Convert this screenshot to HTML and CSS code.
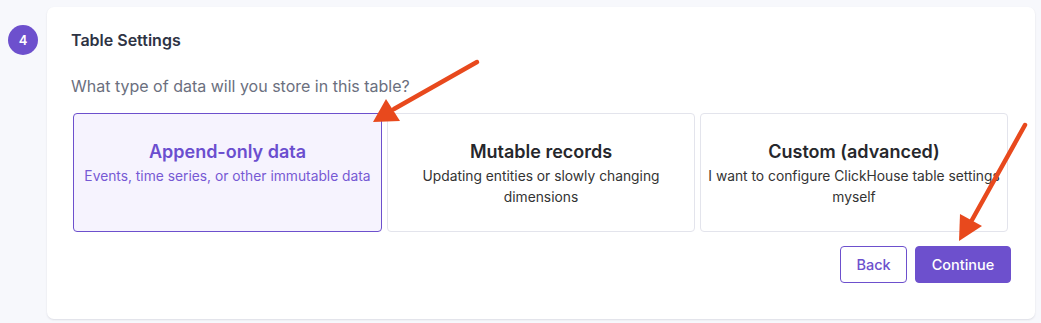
FILE: index.html
```html
<!doctype html>
<html>

<head>
    <meta charset="UTF-8">
    <meta name="viewport" content="width=device-width, initial-scale=1.0">
    <link rel="stylesheet" href="styles.css">
    <title>Table Settings</title>
</head>

<body>
    <div class="step">
        <div class="step-num">4</div>
        <div class="panel">
            <h2 class="panel-title">Table Settings</h2>
            <p class="question">What type of data will you store in this table?</p>

            <div class="options">
                <div class="option selected">
                    <div class="option-title">Append-only data</div>
                    <div class="option-desc">Events, time series, or other immutable data</div>
                </div>
                <div class="option">
                    <div class="option-title">Mutable records</div>
                    <div class="option-desc">Updating entities or slowly changing dimensions</div>
                </div>
                <div class="option">
                    <div class="option-title">Custom (advanced)</div>
                    <div class="option-desc">I want to configure ClickHouse table settings myself</div>
                </div>
            </div>

            <div class="actions">
                <button class="btn btn-back">Back</button>
                <button class="btn btn-continue">Continue</button>
            </div>
        </div>
    </div>

    <!-- annotation arrows drawn over the screenshot -->
    <svg class="arrows" width="1041" height="323" viewBox="0 0 1041 323">
        <line x1="477" y1="62" x2="394" y2="109" stroke="#e8491d" stroke-width="4.5" stroke-linecap="round" />
        <polygon points="373,122 386,99 400,121" fill="#e8491d" />
        <line x1="1025" y1="125" x2="972" y2="220" stroke="#e8491d" stroke-width="4.5" stroke-linecap="round" />
        <polygon points="959,241 960,214 982,226" fill="#e8491d" />
    </svg>
</body>

</html>
```

FILE: styles.css
```css
body {
    margin: 0;
    background: #f7f8fc;
    font-family: Inter, "Noto Sans", sans-serif;
    position: relative;
    height: 323px;
    overflow: hidden;
}

.step {
    display: flex;
    align-items: flex-start;
    padding: 7px 6px 0 8px;
}

.step-num {
    width: 30px;
    height: 30px;
    border-radius: 50%;
    background: #6d50cd;
    color: #fff;
    font-size: 13px;
    font-weight: 600;
    display: flex;
    align-items: center;
    justify-content: center;
    margin-top: 18px;
    flex-shrink: 0;
}

.panel {
    flex: 1;
    min-width: 0;
    margin-left: 9px;
    background: #fff;
    border-radius: 7px;
    box-shadow: 0 1px 2px rgba(30, 35, 60, 0.12);
    padding: 22px 24px 36px 24px;
}

.panel-title {
    margin: 0;
    font-size: 16px;
    line-height: 22px;
    font-weight: 600;
    color: #2e3344;
}

.question {
    margin: 23px 0 0 0;
    font-size: 16px;
    line-height: 24px;
    color: #6b6f7e;
}

.options {
    display: grid;
    grid-template-columns: 309px 308px 308px;
    gap: 5px;
    margin: 15px 3px 0 2px;
}

.option {
    height: 119px;
    box-sizing: border-box;
    border: 1px solid #e3e4ec;
    border-radius: 4px;
    text-align: center;
    padding: 26px 6px 0 6px;
    color: #26272c;
}

.option.selected {
    background: #f6f3fe;
    border-color: #6d50cd;
    color: #6b4ecf;
}

.option-title {
    font-size: 18px;
    line-height: 24px;
    font-weight: 600;
}

.option-desc {
    margin-top: 2px;
    font-size: 13.8px;
    line-height: 21px;
    color: #333;
}

.option.selected .option-desc {
    color: #7659d4;
}

.actions {
    display: flex;
    justify-content: flex-end;
    gap: 8px;
    margin-top: 14px;
}

.btn {
    height: 37px;
    border-radius: 4px;
    font-family: Inter, "Noto Sans", sans-serif;
    font-size: 14.5px;
    font-weight: 500;
    cursor: pointer;
    padding: 0;
}

.btn-back {
    width: 67px;
    background: #fff;
    border: 1px solid #6d50cd;
    color: #6d50cd;
}

.btn-continue {
    width: 96px;
    background: #6d50cd;
    border: 1px solid #6d50cd;
    color: #fff;
}

.arrows {
    position: absolute;
    left: 0;
    top: 0;
    pointer-events: none;
}
```
